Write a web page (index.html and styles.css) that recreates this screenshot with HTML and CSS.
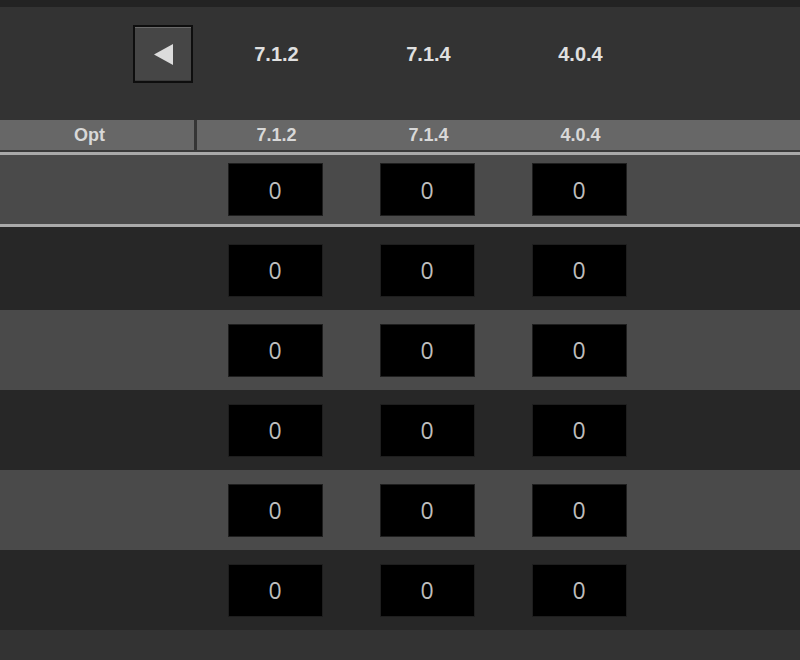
FILE: index.html
```html
<!DOCTYPE html>
<html lang="en">
<head>
    <meta charset="UTF-8">
    <meta name="viewport" content="width=device-width, initial-scale=1.0">
    <title>Speaker Layout</title>
    <link rel="stylesheet" href="styles.css">
</head>
<body>
    <div class="topline"></div>

    <div class="toolbar">
        <div class="nav-cell">
            <button class="nav-btn" aria-label="Previous">
                <svg width="19" height="21" viewBox="0 0 19 21"><polygon points="19,0 19,21 0,10.5" fill="#dcdcdc"/></svg>
            </button>
        </div>
        <div class="col-label">7.1.2</div>
        <div class="col-label">7.1.4</div>
        <div class="col-label">4.0.4</div>
    </div>

    <div class="grid">
        <div class="head-row">
            <div class="opt">Opt</div>
            <div class="head-cell">7.1.2</div>
            <div class="head-cell">7.1.4</div>
            <div class="head-cell">4.0.4</div>
        </div>

        <div class="rows">
            <div class="row selected">
                <div></div>
                <div class="value">0</div>
                <div class="value">0</div>
                <div class="value">0</div>
            </div>
            <div class="row dark">
                <div></div>
                <div class="value">0</div>
                <div class="value">0</div>
                <div class="value">0</div>
            </div>
            <div class="row light">
                <div></div>
                <div class="value">0</div>
                <div class="value">0</div>
                <div class="value">0</div>
            </div>
            <div class="row dark">
                <div></div>
                <div class="value">0</div>
                <div class="value">0</div>
                <div class="value">0</div>
            </div>
            <div class="row light">
                <div></div>
                <div class="value">0</div>
                <div class="value">0</div>
                <div class="value">0</div>
            </div>
            <div class="row dark">
                <div></div>
                <div class="value">0</div>
                <div class="value">0</div>
                <div class="value">0</div>
            </div>
        </div>
    </div>
</body>
</html>
```

FILE: styles.css
```css
body {
    font-family: "Liberation Sans", Arial, sans-serif;
    background-color: #333;
    color: #ddd;
    margin: 0;
    padding: 0;
}

.topline {
    height: 7px;
    background-color: #232323;
}

.toolbar {
    display: grid;
    grid-template-columns: 199px repeat(3, 152px);
    height: 113px;
    box-sizing: border-box;
    padding-top: 18px;
    align-items: start;
}

.nav-cell {
    display: flex;
    justify-content: flex-end;
    padding-right: 6px;
}

.nav-btn {
    width: 60px;
    height: 58px;
    box-sizing: border-box;
    background-color: #464646;
    border: 2px solid #0e0e0e;
    box-shadow: inset 0 1px 0 #6a6a6a, inset 0 -1px 0 #3a3a3a;
    padding: 0;
    display: flex;
    align-items: center;
    justify-content: center;
    cursor: pointer;
}

.col-label {
    line-height: 58px;
    text-align: center;
    font-size: 20px;
    font-weight: bold;
    color: #e0e0e0;
    padding-left: 3px;
}

.head-row {
    display: grid;
    grid-template-columns: 199px repeat(3, 152px);
    height: 32px;
    box-sizing: border-box;
    background-color: #676767;
    border-bottom: 2px solid #3a3a3a;
}

.opt {
    width: 197px;
    box-sizing: border-box;
    border-right: 3px solid #353535;
    padding-right: 15px;
    text-align: center;
    line-height: 30px;
    font-size: 18px;
    font-weight: bold;
    color: #d8d8d8;
}

.head-cell {
    text-align: center;
    line-height: 30px;
    font-size: 18px;
    font-weight: bold;
    color: #d8d8d8;
    padding-left: 3px;
}

.rows {
    background-color: #272727;
}

.row {
    display: grid;
    grid-template-columns: 199px repeat(3, 152px);
    height: 80px;
    box-sizing: border-box;
    align-items: center;
}

.row.selected {
    height: 75px;
    background-color: #4a4a4a;
    border-top: 3px solid #aaa;
    border-bottom: 3px solid #aaa;
    margin-bottom: 3px;
}

.row.dark {
    background-color: #272727;
}

.row.light {
    background-color: #4a4a4a;
}

.value {
    justify-self: center;
    width: 95px;
    height: 53px;
    box-sizing: border-box;
    background-color: #000;
    border: 1px solid #1e1e1e;
    display: flex;
    align-items: center;
    justify-content: center;
    font-family: "Open Sans", "Liberation Sans", sans-serif;
    font-size: 23px;
    color: #bdbdbd;
}
```
